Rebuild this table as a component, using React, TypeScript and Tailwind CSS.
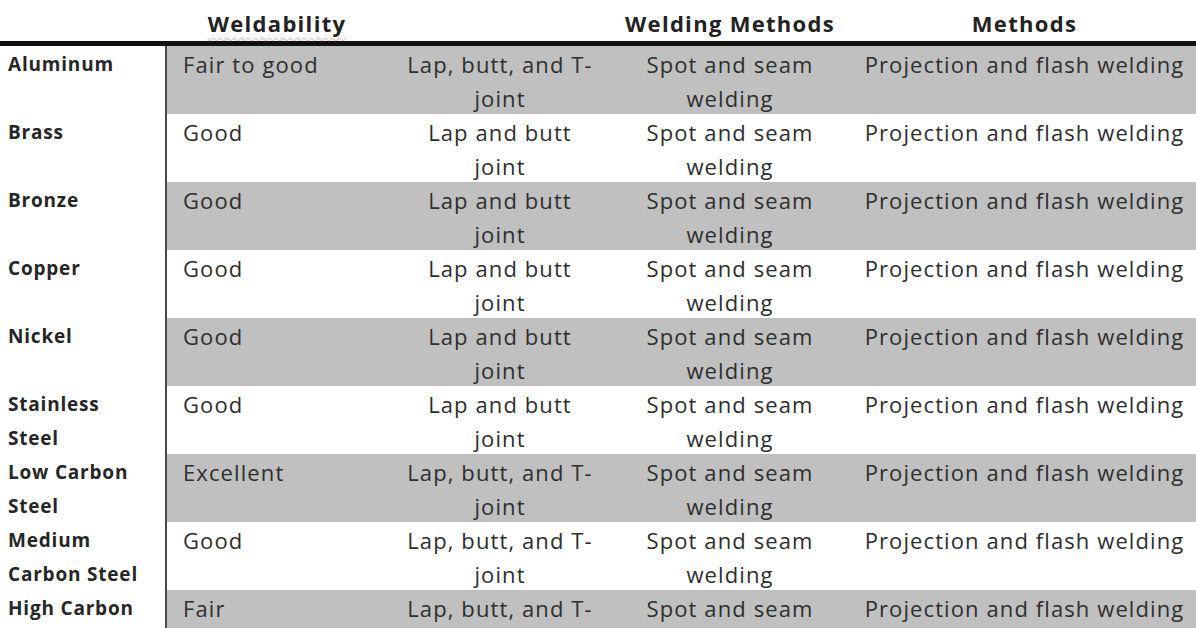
import React from "react";

type Row = { name: string[]; weld: string; joint: string[]; spot: string[]; other: string };

const lapT = ["Lap, butt, and T-", "joint"];
const lap = ["Lap and butt", "joint"];
const spot = ["Spot and seam", "welding"];
const proj = "Projection and flash welding";

const rows: Row[] = [
  { name: ["Aluminum"], weld: "Fair to good", joint: lapT, spot, other: proj },
  { name: ["Brass"], weld: "Good", joint: lap, spot, other: proj },
  { name: ["Bronze"], weld: "Good", joint: lap, spot, other: proj },
  { name: ["Copper"], weld: "Good", joint: lap, spot, other: proj },
  { name: ["Nickel"], weld: "Good", joint: lap, spot, other: proj },
  { name: ["Stainless", "Steel"], weld: "Good", joint: lap, spot, other: proj },
  { name: ["Low Carbon", "Steel"], weld: "Excellent", joint: lapT, spot, other: proj },
  { name: ["Medium", "Carbon Steel"], weld: "Good", joint: lapT, spot, other: proj },
  { name: ["High Carbon", "Steel"], weld: "Fair", joint: lapT, spot, other: proj },
];

function Lines({ lines }: { lines: string[] }) {
  return (
    <>
      {lines.map((l, i) => (
        <div key={i} className="whitespace-nowrap">
          {l}
        </div>
      ))}
    </>
  );
}

function Head({ top, children, className }: { top: string; children: React.ReactNode; className: string }) {
  return (
    <div className={className}>
      <div className="mb-[4px] whitespace-nowrap">{top}</div>
      <div className="whitespace-nowrap">{children}</div>
    </div>
  );
}

export default function App() {
  return (
    <div
      className="w-[1196px] h-[628px] overflow-hidden bg-white text-[#2e2e2e]"
      style={{ fontFamily: '"Open Sans", "Noto Sans", sans-serif' }}
    >
      {/* header */}
      <div className="h-[41px] flex flex-col">
        <div className="grid grid-cols-[167px_226px_214px_246px_343px] mt-[-32px] font-bold text-[22px] leading-[34px] tracking-[1.3px] text-[#222222]">
          <Head className="pl-[8px]" top="Metal Type">
            &nbsp;
          </Head>
          <Head className="text-center pr-[6px]" top="Resistance">
            <span className="underline decoration-wavy decoration-[#e6a3b4] decoration-1 underline-offset-[5px]">
              Weldability
            </span>
          </Head>
          <Head className="text-center" top="Joint Types">
            &nbsp;
          </Head>
          <Head className="text-center" top="Most Common">
            Welding Methods
          </Head>
          <Head className="text-center" top="Other Applicable Welding">
            Methods
          </Head>
        </div>
      </div>
      <div className="h-[5px] bg-[#111111]" />
      {/* body */}
      <div className="flex flex-col">
        {rows.map((r, i) => {
          const gray = i % 2 === 0 ? "bg-[#c0c0c0]" : "bg-white";
          return (
            <div
              key={i}
              className="grid grid-cols-[167px_226px_214px_246px_343px] h-[68px] leading-[34px]"
            >
              <div className="border-r-2 border-[#4a4a4a] pl-[8px] pt-[1px] font-bold text-[19px] tracking-[0.8px] text-[#262626] bg-white">
                <Lines lines={r.name} />
              </div>
              <div className={`${gray} pl-[16px] pt-[1px] text-[22px] font-medium tracking-[1.1px]`}>
                <Lines lines={[r.weld]} />
              </div>
              <div className={`${gray} text-center pt-[1px] text-[22px] font-medium tracking-[1.1px]`}>
                <Lines lines={r.joint} />
              </div>
              <div className={`${gray} text-center pt-[1px] text-[22px] font-medium tracking-[1.1px]`}>
                <Lines lines={r.spot} />
              </div>
              <div className={`${gray} text-center pt-[1px] text-[22px] font-medium tracking-[1.1px]`}>
                <Lines lines={[r.other]} />
              </div>
            </div>
          );
        })}
      </div>
    </div>
  );
}
